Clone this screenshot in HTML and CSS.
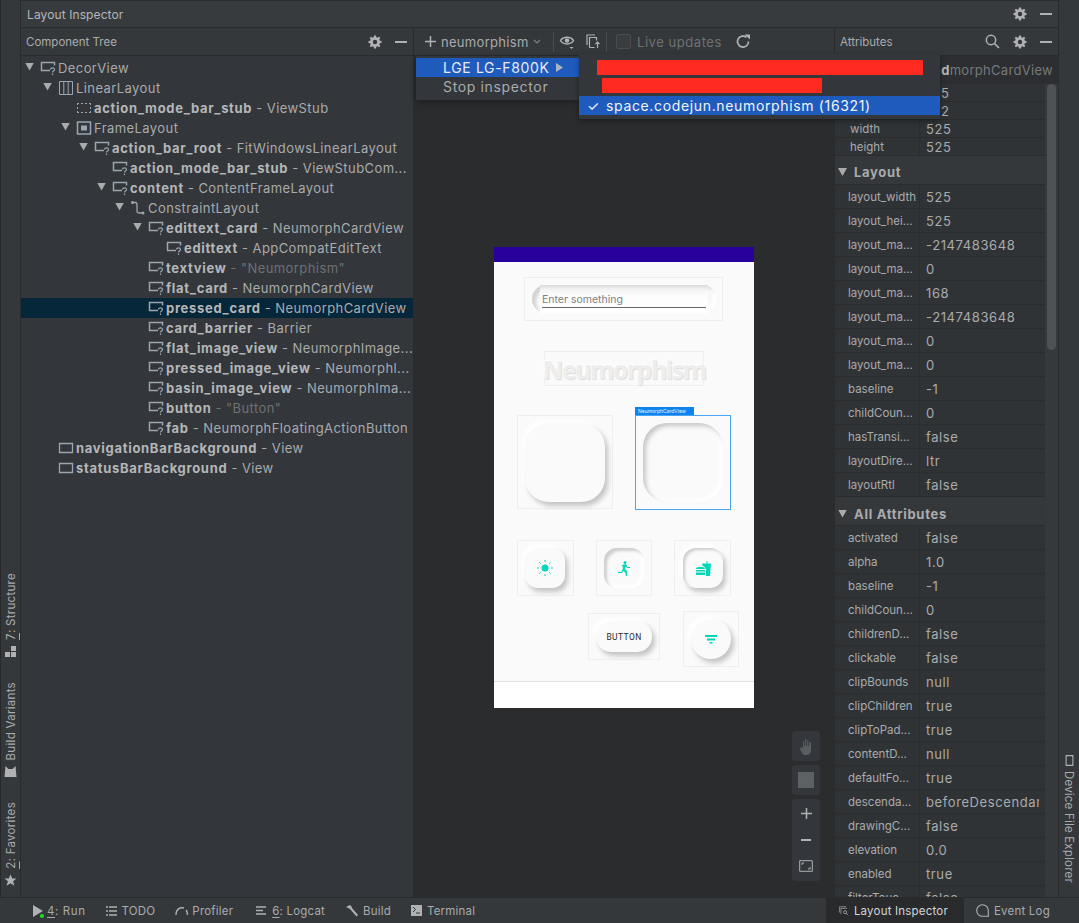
FILE: index.html
```html
<!DOCTYPE html>
<html lang="en">
<head>
<meta charset="utf-8">
<title>Layout Inspector</title>
<link rel="stylesheet" href="styles.css">
</head>
<body>
<svg class="defs" width="0" height="0">
  <symbol id="i-view" viewBox="0 0 16 14"><path d="M10 9.500H1.500V1.500H14.500V4.500" fill="none" stroke="#9aa7b0" stroke-width="1.500"/><path d="M10.500 8.500c0-2.200 4-2.200 4 0 0 1.500-2 1.500-2 3M12.500 12.600v1.300" fill="none" stroke="#9aa7b0" stroke-width="1.200"/></symbol>
  <symbol id="i-gear" viewBox="0 0 14 14"><path d="M6 .5h2l.3 1.700 1.200.5L11 1.700l1.300 1.300-1 1.500.5 1.200 1.700.3v2l-1.700.3-.5 1.200 1 1.500L11 12.300l-1.500-1-1.200.5L8 13.500H6l-.3-1.700-1.200-.5-1.500 1L1.700 11l1-1.500-.5-1.200L.5 8V6l1.700-.3.5-1.200-1-1.500L3 1.700l1.500 1 1.200-.5z" fill="#afb1b3"/><circle cx="7" cy="7" r="2.200" fill="#33363a"/></symbol>
</svg>
<div class="app">
  <div class="main">
    <aside class="strip-left">
      <div class="vtab"><span class="vlabel"><u>7</u>: Structure</span><svg class="vicon" width="13" height="13" viewBox="0 0 13 13"><path d="M7 1h5v5H7zM1 7h5v5H1zM7 7h5v5H7z" fill="#afb1b3"/></svg></div>
      <div class="vtab"><span class="vlabel">Build Variants</span><svg class="vicon" width="13" height="13" viewBox="0 0 13 13"><path d="M1.500 1L4.500 4h4l3-3 1 11H.5z" fill="#afb1b3"/></svg></div>
      <div class="vtab"><span class="vlabel"><u>2</u>: Favorites</span><svg class="vicon" width="13" height="13" viewBox="0 0 13 13"><path d="M6.500 .5l1.800 4h4.200l-3.400 2.800 1.300 4.500-3.900-2.600-3.900 2.600 1.300-4.500L.5 4.500h4.200z" fill="#afb1b3"/></svg></div>
    </aside>
    <div class="workspace">
      <header class="title-bar">
        <span class="title">Layout Inspector</span>
        <span class="head-icons">
          <svg class="gear" width="14" height="14"><use href="#i-gear"/></svg>
          <span class="dash"></span>
        </span>
      </header>
      <div class="panes">
        <section class="tree-pane">
          <div class="pane-head">
            <span class="pane-title">Component Tree</span>
            <span class="head-icons">
              <svg class="gear" width="14" height="14"><use href="#i-gear"/></svg>
              <span class="dash"></span>
            </span>
          </div>
          <div class="tree">
            <div class="row d0"><i class="tw"></i><svg class="ico" width="16" height="14"><use href="#i-view"/></svg><span class="tn">DecorView</span></div>
            <div class="row d1"><i class="tw"></i><svg class="ico" width="16" height="16" viewBox="0 0 16 16"><path d="M1.500 1.500h13v13h-13zM5.800 1.500v13M10.200 1.500v13" fill="none" stroke="#9aa7b0"/></svg><span class="tn">LinearLayout</span></div>
            <div class="row d2"><i class="sp"></i><svg class="ico" width="16" height="14" viewBox="0 0 16 14"><path d="M1 2.500h14M1 11.500h14M1.500 2v10M14.500 2v10" fill="none" stroke="#9aa7b0" stroke-dasharray="2 2"/></svg><b>action_mode_bar_stub</b><span class="tn"> - ViewStub</span></div>
            <div class="row d2"><i class="tw"></i><svg class="ico" width="16" height="14" viewBox="0 0 16 14"><path d="M1.500 1h13v12h-13z" fill="none" stroke="#9aa7b0" stroke-width="1.500"/><path d="M5 4.500h6v5H5z" fill="#9aa7b0"/></svg><span class="tn">FrameLayout</span></div>
            <div class="row d3"><i class="tw"></i><svg class="ico" width="16" height="14"><use href="#i-view"/></svg><b>action_bar_root</b><span class="tn"> - FitWindowsLinearLayout</span></div>
            <div class="row d4"><i class="sp"></i><svg class="ico" width="16" height="14"><use href="#i-view"/></svg><b>action_mode_bar_stub</b><span class="tn"> - ViewStubCom...</span></div>
            <div class="row d4"><i class="tw"></i><svg class="ico" width="16" height="14"><use href="#i-view"/></svg><b>content</b><span class="tn"> - ContentFrameLayout</span></div>
            <div class="row d5"><i class="tw"></i><svg class="ico" width="16" height="16" viewBox="0 0 16 16"><path d="M3 2.500h2.500C7 2.500 7 4 7 5v6c0 1.500 1 2 2.500 2H12" fill="none" stroke="#9aa7b0" stroke-width="1.300"/><circle cx="2.500" cy="2.500" r="1.500" fill="#9aa7b0"/><circle cx="13" cy="13" r="1.500" fill="#9aa7b0"/></svg><span class="tn">ConstraintLayout</span></div>
            <div class="row d6"><i class="tw"></i><svg class="ico" width="16" height="14"><use href="#i-view"/></svg><b>edittext_card</b><span class="tn"> - NeumorphCardView</span></div>
            <div class="row d7"><i class="sp"></i><svg class="ico" width="16" height="14"><use href="#i-view"/></svg><b>edittext</b><span class="tn"> - AppCompatEditText</span></div>
            <div class="row d6"><i class="sp"></i><svg class="ico" width="16" height="14"><use href="#i-view"/></svg><b>textview</b><span class="tq"> - "Neumorphism"</span></div>
            <div class="row d6"><i class="sp"></i><svg class="ico" width="16" height="14"><use href="#i-view"/></svg><b>flat_card</b><span class="tn"> - NeumorphCardView</span></div>
            <div class="row d6 selected"><i class="sp"></i><svg class="ico" width="16" height="14"><use href="#i-view"/></svg><b>pressed_card</b><span class="tn"> - NeumorphCardView</span></div>
            <div class="row d6"><i class="sp"></i><svg class="ico" width="16" height="14"><use href="#i-view"/></svg><b>card_barrier</b><span class="tn"> - Barrier</span></div>
            <div class="row d6"><i class="sp"></i><svg class="ico" width="16" height="14"><use href="#i-view"/></svg><b>flat_image_view</b><span class="tn"> - NeumorphImage...</span></div>
            <div class="row d6"><i class="sp"></i><svg class="ico" width="16" height="14"><use href="#i-view"/></svg><b>pressed_image_view</b><span class="tn"> - Neumorphl...</span></div>
            <div class="row d6"><i class="sp"></i><svg class="ico" width="16" height="14"><use href="#i-view"/></svg><b>basin_image_view</b><span class="tn"> - NeumorphIma...</span></div>
            <div class="row d6"><i class="sp"></i><svg class="ico" width="16" height="14"><use href="#i-view"/></svg><b>button</b><span class="tq"> - "Button"</span></div>
            <div class="row d6"><i class="sp"></i><svg class="ico" width="16" height="14"><use href="#i-view"/></svg><b>fab</b><span class="tn"> - NeumorphFloatingActionButton</span></div>
            <div class="row d1"><i class="sp"></i><svg class="ico" width="16" height="12" viewBox="0 0 16 12"><path d="M1.500 1.500h13v9h-13z" fill="none" stroke="#9aa7b0" stroke-width="1.300"/></svg><b>navigationBarBackground</b><span class="tn"> - View</span></div>
            <div class="row d1"><i class="sp"></i><svg class="ico" width="16" height="12" viewBox="0 0 16 12"><path d="M1.500 1.500h13v9h-13z" fill="none" stroke="#9aa7b0" stroke-width="1.300"/></svg><b>statusBarBackground</b><span class="tn"> - View</span></div>
          </div>
        </section>

        <section class="center-pane">
          <div class="toolbar">
            <svg class="plus" width="11" height="11" viewBox="0 0 11 11"><path d="M5.500 0v11M0 5.500h11" stroke="#afb1b3" stroke-width="1.500"/></svg>
            <span class="tool-name">neumorphism</span>
            <svg class="chev" width="8" height="6" viewBox="0 0 8 6"><path d="M1 1l3 3 3-3" fill="none" stroke="#7f8285" stroke-width="1.200"/></svg>
            <span class="tsep first"></span>
            <svg class="eye" width="18" height="16" viewBox="0 0 18 16"><path d="M1.500 6.500C4 2 12 2 14.500 6.500 12 11 4 11 1.500 6.500z" fill="none" stroke="#afb1b3" stroke-width="1.500"/><circle cx="8" cy="6.500" r="2.300" fill="#afb1b3"/><path d="M10.500 13h4L12.500 15z" fill="#afb1b3"/></svg>
            <svg class="copy" width="15" height="15" viewBox="0 0 15 15"><path d="M1 11V1h8M3.500 13.500v-10h7v3M3.500 13.500h5" fill="none" stroke="#afb1b3" stroke-width="1.200"/><path d="M11.500 8v6M9.500 10l2-2 2 2" fill="none" stroke="#afb1b3" stroke-width="1.200"/></svg>
            <span class="tsep"></span>
            <span class="check"></span>
            <span class="live">Live updates</span>
            <svg class="refresh" width="15" height="15" viewBox="0 0 15 15"><path d="M12.500 7.500a5.500 5.500 0 1 1-2-4.200" fill="none" stroke="#afb1b3" stroke-width="1.700"/><path d="M8.500 .5h5.500v5z" fill="#afb1b3"/></svg>
          </div>
          <div class="canvas">
            <div class="device">
              <div class="status-bar"></div>
              <div class="nav-bar"></div>

              <div class="vb edit-box"></div>
              <div class="pill"></div>
              <div class="edit-inner"><span class="edit-text">Enter something</span></div>

              <div class="vb text-box"><span class="neu-text">Neumorphism</span></div>

              <div class="vb flat-box"></div>
              <div class="card flat-card"></div>
              <div class="sel-tab">NeumorphCardView</div>
              <div class="pressed-box"></div>
              <div class="card pressed-card"></div>

              <div class="vb s1-box"></div>
              <div class="card small s1"><svg width="16" height="16" viewBox="0 0 16 16"><circle cx="8" cy="8" r="3.500" fill="#05d7b8"/><path d="M8 0v2M8 14v2M0 8h2M14 8h2M2.300 2.300l1.400 1.400M12.300 12.300l1.400 1.400M2.300 13.700l1.400-1.400M12.300 3.700l1.400-1.400" stroke="#05d7b8" stroke-width="1"/></svg></div>
              <div class="vb s2-box"></div>
              <div class="card small in s2"><svg width="12" height="15" viewBox="0 0 12 15"><circle cx="7" cy="1.500" r="1.500" fill="#05d7b8"/><path d="M4 4l4-1 1.500 3H12v1H9L8 5.500 7 8l2 2v5H8l-1-4-2-1-1 2H0v-1h3.500L5 7z" fill="#05d7b8"/></svg></div>
              <div class="vb s3-box"></div>
              <div class="card small in-out s3"><svg width="15" height="15" viewBox="0 0 15 15"><path d="M10.500 0h1v2.500H15L14 15h-4V8.500C9 6 7.500 5 6 4.500l.5-2h4z" fill="#05d7b8"/><path d="M0 8c0-3 9-3 9 0zM0 9h9v1.500H0zM0 11.500h9V14H0z" fill="#05d7b8"/></svg></div>
              <div class="vb btn-box"></div>
              <div class="card btn"><span class="btn-text">BUTTON</span></div>
              <div class="vb fab-box"></div>
              <div class="card fab"><svg width="12" height="9" viewBox="0 0 12 9"><path d="M0 0h12v2H0zM2 3.500h8v2H2zM4.500 7h3v1.500h-3z" fill="#05d7b8"/></svg></div>
            </div>
            <div class="controls">
              <div class="ctl"><svg width="15" height="17" viewBox="0 0 15 17"><path d="M2 9l2 1V3h1v5h1V1h1.200v7h1V2h1.100v6h1V4H12v8c0 3-2 5-4 5H6c-2 0-3-2-5-6z" fill="#5a5d60"/></svg></div>
              <div class="ctl"><span class="ctl-square"></span></div>
              <div class="ctl-group">
                <svg width="11" height="11" viewBox="0 0 11 11"><path d="M5.500 0v11M0 5.500h11" stroke="#afb1b3" stroke-width="1.500"/></svg>
                <span class="ctl-minus"></span>
                <svg width="14" height="12" viewBox="0 0 14 12"><path d="M.7.700h12.600v10.600H.7z" fill="none" stroke="#afb1b3"/><path d="M3 5V3h2M11 7v2H9" fill="none" stroke="#afb1b3"/></svg>
              </div>
            </div>
          </div>
        </section>

        <section class="attr-pane">
          <div class="pane-head attr-head">
            <span class="pane-title">Attributes</span>
            <span class="head-icons">
              <svg width="15" height="15" viewBox="0 0 15 15"><circle cx="6" cy="6" r="4.700" fill="none" stroke="#afb1b3" stroke-width="1.500"/><path d="M9.500 9.500l4.500 4.500" stroke="#afb1b3" stroke-width="1.700"/></svg>
              <svg class="gear" width="14" height="14"><use href="#i-gear"/></svg>
              <span class="dash"></span>
            </span>
          </div>
          <div class="attr-sub"><b>d</b>morphCardView</div>
          <div class="attr-scroll">
            <div class="attr-body">
              <div class="ar tight"><span class="an in1"></span><span class="av under">5</span></div>
              <div class="ar tight"><span class="an in1"></span><span class="av under">2</span></div>
              <div class="ar tight"><span class="an in1">width</span><span class="av">525</span></div>
              <div class="ar tight"><span class="an in1">height</span><span class="av">525</span></div>
              <div class="sec first-sec"><i class="tw"></i>Layout</div>
              <div class="ar"><span class="an">layout_width</span><span class="av">525</span></div>
              <div class="ar"><span class="an">layout_hei...</span><span class="av">525</span></div>
              <div class="ar"><span class="an">layout_ma...</span><span class="av">-2147483648</span></div>
              <div class="ar"><span class="an">layout_ma...</span><span class="av">0</span></div>
              <div class="ar"><span class="an">layout_ma...</span><span class="av">168</span></div>
              <div class="ar"><span class="an">layout_ma...</span><span class="av">-2147483648</span></div>
              <div class="ar"><span class="an">layout_ma...</span><span class="av">0</span></div>
              <div class="ar"><span class="an">layout_ma...</span><span class="av">0</span></div>
              <div class="ar"><span class="an">baseline</span><span class="av">-1</span></div>
              <div class="ar"><span class="an">childCoun...</span><span class="av">0</span></div>
              <div class="ar"><span class="an">hasTransi...</span><span class="av">false</span></div>
              <div class="ar"><span class="an">layoutDire...</span><span class="av">ltr</span></div>
              <div class="ar"><span class="an">layoutRtl</span><span class="av">false</span></div>
              <div class="sec second-sec"><i class="tw"></i>All Attributes</div>
              <div class="ar"><span class="an">activated</span><span class="av">false</span></div>
              <div class="ar"><span class="an">alpha</span><span class="av">1.0</span></div>
              <div class="ar"><span class="an">baseline</span><span class="av">-1</span></div>
              <div class="ar"><span class="an">childCoun...</span><span class="av">0</span></div>
              <div class="ar"><span class="an">childrenD...</span><span class="av">false</span></div>
              <div class="ar"><span class="an">clickable</span><span class="av">false</span></div>
              <div class="ar"><span class="an">clipBounds</span><span class="av">null</span></div>
              <div class="ar"><span class="an">clipChildren</span><span class="av">true</span></div>
              <div class="ar"><span class="an">clipToPad...</span><span class="av">true</span></div>
              <div class="ar"><span class="an">contentD...</span><span class="av">null</span></div>
              <div class="ar"><span class="an">defaultFo...</span><span class="av">true</span></div>
              <div class="ar"><span class="an">descenda...</span><span class="av">beforeDescendar</span></div>
              <div class="ar"><span class="an">drawingC...</span><span class="av">false</span></div>
              <div class="ar"><span class="an">elevation</span><span class="av">0.0</span></div>
              <div class="ar"><span class="an">enabled</span><span class="av">true</span></div>
              <div class="ar"><span class="an">filterTouc...</span><span class="av">false</span></div>
            </div>
            <div class="scrollbar"><span class="thumb"></span></div>
          </div>
        </section>
      </div>
    </div>
    <aside class="strip-right">
      <div class="rtab">
        <svg width="11" height="13" viewBox="0 0 13 11"><path d="M.7 1.500h11.600v8H.7z" fill="none" stroke="#afb1b3" stroke-width="1.300" transform="rotate(90 6.500 5.500)"/></svg>
        <span class="rlabel">Device File Explorer</span>
      </div>
    </aside>
  </div>
  <footer class="bottom-bar">
    <span class="bt run"><svg width="14" height="14" viewBox="0 0 14 14"><path d="M1 1l10 6-10 6z" fill="#afb1b3"/><circle cx="10" cy="12" r="2" fill="#19e619"/></svg><span><u>4</u>: Run</span></span>
    <span class="bt"><svg width="11" height="10" viewBox="0 0 11 10"><path d="M0 1h2M3 1h8M0 5h2M3 5h8M0 9h2M3 9h8" stroke="#afb1b3" stroke-width="1.400"/></svg><span>TODO</span></span>
    <span class="bt prof"><svg width="14" height="9" viewBox="0 0 14 9"><path d="M1 9C1 3 5 1 9 2M11 4c1 1 1.500 3 1.500 5" fill="none" stroke="#afb1b3" stroke-width="1.400"/></svg><span>Profiler</span></span>
    <span class="bt"><svg width="11" height="9" viewBox="0 0 11 9"><path d="M0 1h10M0 4.500h7M0 8h10" stroke="#afb1b3" stroke-width="1.300"/></svg><span><u>6</u>: Logcat</span></span>
    <span class="bt"><svg width="13" height="12" viewBox="0 0 13 12"><path d="M1 2l4-2 2 2-2 2zM5 4l1.500-1.500L13 10l-1.500 1.500z" fill="#afb1b3"/></svg><span>Build</span></span>
    <span class="bt"><svg width="11" height="11" viewBox="0 0 11 11"><path d="M0 0h11v11H0z" fill="#afb1b3"/><path d="M2 2l2.500 2.500L2 7M5 8h4" fill="none" stroke="#33363a"/></svg><span>Terminal</span></span>
    <span class="spacer"></span>
    <span class="bt active"><svg width="13" height="12" viewBox="0 0 13 12"><path d="M.5 8V.5h9M2.500 10V2.500h8" fill="none" stroke="#afb1b3" stroke-width=".9"/><circle cx="8" cy="7.500" r="2" fill="#282a2c" stroke="#afb1b3"/><path d="M9.500 9l2.500 2.500" stroke="#afb1b3"/></svg><span>Layout Inspector</span></span>
    <span class="bt log"><svg width="13" height="13" viewBox="0 0 13 13"><path d="M6.500 .7a5.800 5.800 0 1 0 0 11.600h5.800V6.500A5.800 5.800 0 0 0 6.500.7z" fill="none" stroke="#afb1b3" stroke-width="1.100"/></svg><span>Event Log</span></span>
  </footer>

  <div class="menu menu-a">
    <div class="mi on">LGE LG-F800K<i class="arrow"></i></div>
    <div class="mi">Stop inspector</div>
  </div>
  <div class="menu menu-b">
    <div class="redact r1"></div>
    <div class="redact r2"></div>
    <div class="mi2"><span class="tick">✓</span>space.codejun.neumorphism (16321)</div>
  </div>
</div>
</body>
</html>
```

FILE: styles.css
```css
* { box-sizing: border-box; }
html, body { margin: 0; height: 100%; }
body { background: #33363a; font-family: "Inter", "Liberation Sans", sans-serif; color: #b4b6b8; overflow: hidden; }
.defs { position: absolute; }
.app { position: relative; height: 923px; display: flex; flex-direction: column; overflow: hidden; }
.main { flex: 1; display: flex; min-height: 0; }

/* side strips */
.strip-left { width: 21px; flex: none; background: #35383b; border-left: 1px solid #26282a; border-right: 1px solid #292b2d; display: flex; flex-direction: column; justify-content: flex-end; align-items: center; padding-bottom: 10px; gap: 24px; }
.vtab { display: flex; flex-direction: column; align-items: center; gap: 5px; }
.vlabel { writing-mode: vertical-rl; transform: rotate(180deg); font-size: 11.500px; color: #a9abad; line-height: 12px; letter-spacing: .3px; }
.vicon { display: block; }
.strip-right { width: 21px; flex: none; background: #35383b; border-left: 1px solid #292b2d; display: flex; flex-direction: column; align-items: center; padding-top: 754px; }
.rtab { display: flex; flex-direction: column; align-items: center; gap: 4px; }
.rlabel { writing-mode: vertical-rl; font-size: 11.500px; color: #a9abad; line-height: 12px; letter-spacing: .2px; }

/* workspace */
.workspace { flex: 1; min-width: 0; display: flex; flex-direction: column; }
.title-bar { height: 28px; flex: none; display: flex; align-items: center; justify-content: space-between; padding: 0 0 0 6px; background: #383b3e; border-top: 1px solid #2a2c2e; border-bottom: 1px solid #292b2d; }
.title { font-size: 12px; color: #b4b6b8; letter-spacing: .1px; }
.head-icons { display: flex; align-items: center; gap: 13px; padding-right: 6px; }
.dash { display: block; width: 12px; height: 2px; background: #afb1b3; }
.panes { flex: 1; display: flex; min-height: 0; }

.pane-head { height: 28px; display: flex; align-items: center; justify-content: space-between; padding: 0 0 0 5px; background: #35383b; border-bottom: 1px solid #292b2d; }
.pane-title { font-size: 11.500px; color: #a9abad; }

/* tree */
.tree-pane { width: 393px; flex: none; background: #33363a; border-right: 1px solid #292b2d; }
.tree { padding-top: 2px; }
.row { height: 20px; display: flex; align-items: center; font-size: 13px; letter-spacing: .42px; white-space: nowrap; color: #b4b6b8; overflow: hidden; }
.row b { font-weight: 700; color: #b4b6b8; letter-spacing: .7px; }
.tn { color: #a9abad; white-space: pre; }
.tq { color: #6e7174; white-space: pre; }
.tw { display: inline-block; flex: none; width: 9px; height: 8px; background: #a9abad; clip-path: polygon(0 0, 100% 0, 50% 100%); margin-right: 6px; margin-top: -3px; }
.sp { display: inline-block; flex: none; width: 15px; }
.ico { flex: none; margin-right: 2px; }
.d0 { padding-left: 4px; }
.d1 { padding-left: 22px; }
.d2 { padding-left: 40px; }
.d3 { padding-left: 58px; }
.d4 { padding-left: 76px; }
.d5 { padding-left: 94px; }
.d6 { padding-left: 112px; }
.d7 { padding-left: 130px; }
.selected { background: #06263a; }

/* center */
.center-pane { flex: 1; min-width: 0; display: flex; flex-direction: column; }
.toolbar { height: 28px; flex: none; display: flex; align-items: center; background: #35383b; border-bottom: 1px solid #292b2d; padding-left: 11px; }
.plus { margin-right: 5px; }
.tool-name { font-size: 13px; letter-spacing: .3px; color: #a9abad; width: 87px; white-space: nowrap; }
.chev { margin-left: 5px; }
.tsep { width: 1px; height: 20px; background: #4a4d50; margin-left: 5px; }
.tsep.first { margin-left: 12px; }
.eye { margin-left: 5px; }
.copy { margin-left: 9px; }
.check { width: 15px; height: 15px; margin-left: 9px; border: 1px solid #4a4d50; border-radius: 2px; background: #3a3d40; }
.live { font-size: 13px; letter-spacing: .55px; color: #6e7174; margin-left: 6px; width: 85px; white-space: nowrap; }
.refresh { margin-left: 14px; }

.canvas { position: relative; flex: 1; background: #2a2c2e; display: flex; justify-content: center; align-items: flex-start; padding-top: 191px; min-height: 0; }
.device { position: relative; width: 260px; height: 461px; background: #fafafa; flex: none; overflow: visible; }
.status-bar { height: 15px; background: #2a009c; }
.nav-bar { position: absolute; left: 0; right: 0; bottom: 0; height: 27px; background: #fff; border-top: 1px solid #e2e2e2; }

.vb { position: absolute; border: 1px solid #efefef; }
.edit-box { left: 30px; top: 30px; width: 199px; height: 44px; }
.pill { position: absolute; left: 38px; top: 38px; width: 184px; height: 28px; border-radius: 14px; background: #f7f7f7; box-shadow: inset 4px 3px 3px #d4d4d4, inset -3px -3px 3px #fff; }
.edit-inner { position: absolute; left: 46px; top: 38px; width: 168px; height: 28px; background: linear-gradient(#d9d9d9, #f2f2f2 4px, #fcfcfc 10px, #fff); display: flex; align-items: flex-end; padding: 0 2px 5px; }
.edit-text { flex: 1; font-size: 10.500px; line-height: 14px; color: #808080; border-bottom: 1px solid #666; white-space: nowrap; }
.text-box { left: 50px; top: 104px; width: 160px; height: 35px; display: flex; align-items: center; justify-content: center; }
.neu-text { font-family: "Noto Sans", sans-serif; font-size: 25px; font-weight: 700; color: #eeeeee; letter-spacing: -1.500px; text-shadow: 1px 1px 1px #dcdcdc, -1px -1px 1px #fff; white-space: nowrap; }
.flat-box { left: 23px; top: 168px; width: 96px; height: 94px; }
.card { position: absolute; background: #fafafa; display: flex; align-items: center; justify-content: center; box-shadow: 3px 4px 5px #c4c4c4, -3px -3px 5px #fff; }
.flat-card { left: 31px; top: 176px; width: 80px; height: 79px; border-radius: 24px; }
.pressed-box { position: absolute; left: 141px; top: 168px; width: 96px; height: 95px; border: 1.500px solid #4aa3f5; }
.sel-tab { position: absolute; left: 141px; top: 160px; width: 59px; height: 8px; background: #0d83f0; color: #e8f2ff; font-size: 5px; line-height: 8px; padding-left: 3px; white-space: nowrap; overflow: hidden; }
.pressed-card { left: 149px; top: 176px; width: 80px; height: 79px; border-radius: 24px; box-shadow: inset 3px 3px 4px #c8c8c8, inset -3px -3px 4px #fff; }
.small { width: 40px; height: 40px; border-radius: 13px; top: 301px; }
.s1-box { left: 23px; top: 293px; width: 57px; height: 56px; }
.s1 { left: 31px; }
.s2-box { left: 102px; top: 293px; width: 56px; height: 56px; }
.s2 { left: 110px; }
.in { box-shadow: inset 3px 3px 3px #cfcfcf, inset -3px -3px 3px #fff; }
.s3-box { left: 180px; top: 293px; width: 57px; height: 56px; }
.s3 { left: 189px; }
.in-out { box-shadow: inset 2px 2px 3px #ccc, 3px 4px 4px #c8c8c8, -3px -3px 5px #fff; }
.btn-box { left: 94px; top: 366px; width: 72px; height: 47px; }
.btn { left: 102px; top: 374px; width: 56px; height: 31px; border-radius: 15px; }
.btn-text { font-family: "Roboto", sans-serif; font-size: 8.500px; font-weight: 400; color: #2a2a2a; letter-spacing: .4px; }
.fab-box { left: 189px; top: 364px; width: 56px; height: 56px; }
.fab { left: 197px; top: 372px; width: 40px; height: 40px; border-radius: 50%; }

.controls { position: absolute; right: 14px; bottom: 16px; width: 28px; display: flex; flex-direction: column; gap: 4px; }
.ctl { height: 30px; background: #33363a; border-radius: 3px; display: flex; align-items: center; justify-content: center; }
.ctl-square { display: block; width: 16px; height: 16px; background: #5e6164; }
.ctl-group { height: 82px; background: #33363a; border-radius: 3px; display: flex; flex-direction: column; align-items: center; justify-content: space-between; padding: 9px 0 9px; }
.ctl-minus { display: block; width: 10px; height: 2px; background: #afb1b3; }

/* attributes */
.attr-pane { width: 224px; flex: none; background: #33363a; border-left: 1px solid #292b2d; display: flex; flex-direction: column; min-height: 0; }
.attr-head { padding-left: 5px; padding-right: 0; }
.attr-sub { height: 28px; flex: none; display: flex; align-items: center; justify-content: flex-end; padding-right: 5px; background: #2c2e31; font-size: 13px; letter-spacing: .3px; color: #76797c; }
.attr-sub b { color: #b4b6b8; }
.attr-scroll { flex: 1; display: flex; min-height: 0; overflow: hidden; background: #2f3235; }
.attr-body { width: 210px; flex: none; background: #33363a; overflow: hidden; }
.ar { height: 24px; display: flex; align-items: center; border-bottom: 1px solid #2a2c2e; background: #303336; white-space: nowrap; }
.ar.tight { height: 18px; }
.an { width: 85px; flex: none; padding-left: 13px; font-size: 11.500px; color: #a9abad; border-right: 1px solid #2a2c2e; height: 100%; display: flex; align-items: center; overflow: hidden; }
.an.in1 { padding-left: 15px; }
.av { padding-left: 6px; font-size: 13px; letter-spacing: .6px; color: #a9abad; overflow: hidden; width: 119px; }
.av.under { padding-left: 21px; }
.sec { display: flex; align-items: center; padding-left: 3px; font-size: 13px; letter-spacing: .7px; font-weight: 700; color: #a9abad; background: #35383b; border-bottom: 1px solid #2a2c2e; }
.first-sec { margin-top: 4px; height: 25px; }
.second-sec { height: 29px; padding-top: 5px; }
.sec .tw { margin-right: 7px; margin-top: 0; }
.scrollbar { flex: 1; position: relative; background: #36393c; padding: 0 2px; }
.thumb { display: block; height: 266px; width: 9px; background: #4f5255; border-radius: 5px; }

/* bottom bar */
.bottom-bar { height: 26px; flex: none; display: flex; align-items: stretch; background: #35383b; border-top: 1px solid #292b2d; font-size: 11.500px; color: #a9abad; padding-left: 32px; letter-spacing: .2px; }
.bt { display: flex; align-items: center; gap: 5px; margin-right: 20px; white-space: nowrap; }
.bt.run { gap: 1px; letter-spacing: .6px; }
.bt.prof { gap: 3px; margin-right: 23px; }
.spacer { flex: 1; }
.bt.active { background: #282a2c; color: #d4d6d8; margin: 0; padding: 0 16px 0 13px; width: 138px; }
.bt.log { margin: 0 0 0 12px; width: 103px; }

/* menus */
.menu { position: absolute; background: #33363a; box-shadow: 0 2px 6px rgba(0,0,0,.35); }
.menu-a { left: 416px; top: 56px; width: 163px; height: 44px; padding-top: 2px; }
.mi { height: 19px; padding-left: 27px; font-size: 14px; line-height: 19px; color: #a9abad; letter-spacing: .65px; display: flex; align-items: center; position: relative; white-space: nowrap; }
.mi.on { background: #1f5bbd; color: #e8ecf2; }
.arrow { position: absolute; left: 140px; top: 5px; width: 7px; height: 9px; background: #a9b4c4; clip-path: polygon(0 0, 100% 50%, 0 100%); }
.menu-b { left: 579px; top: 54px; width: 361px; height: 65px; padding-top: 6px; }
.redact { background: #ff2a20; height: 15px; }
.r1 { margin-left: 18px; width: 326px; }
.r2 { margin: 3px 0 0 23px; width: 220px; }
.mi2 { margin-top: 3px; height: 19px; background: #1f5bbd; color: #f2f4f8; font-size: 14px; letter-spacing: .65px; display: flex; align-items: center; white-space: nowrap; }
.tick { width: 27px; padding-left: 8px; flex: none; font-size: 14px; letter-spacing: 0; }
u { text-underline-offset: 2px; }
```
